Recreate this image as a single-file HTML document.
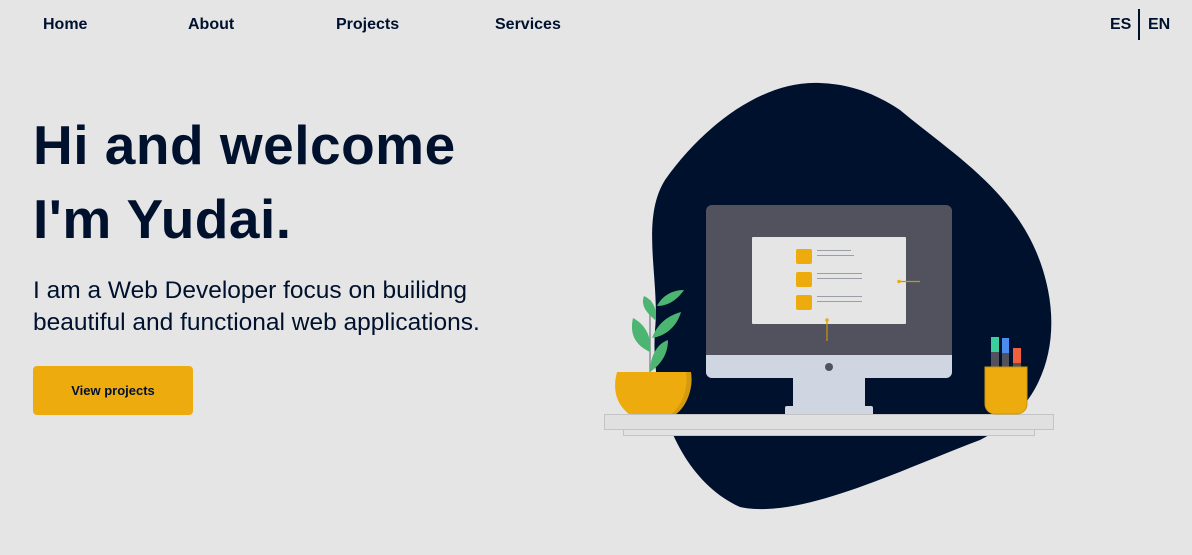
<!DOCTYPE html>
<html><head><meta charset="utf-8"><style>
*{margin:0;padding:0;box-sizing:border-box}
body{width:1192px;height:555px;background:#e5e5e5;font-family:"Liberation Sans",sans-serif;color:#00112e;position:relative;overflow:hidden}
.nav a{position:absolute;top:16px;font-weight:bold;font-size:16px;color:#00112e;text-decoration:none}
h1{position:absolute;left:33px;top:108px;font-size:55px;line-height:74px;font-weight:bold;letter-spacing:0.5px}
p{position:absolute;left:33px;top:275px;font-size:24.5px;line-height:32px}
.btn{position:absolute;left:33px;top:366px;width:160px;height:49px;background:#eeab0e;border-radius:4px;font-size:13px;font-weight:bold;display:flex;align-items:center;justify-content:center}
svg{position:absolute;left:0;top:0}
</style></head><body>
<div class="nav">
<a style="left:43px">Home</a><a style="left:188px">About</a><a style="left:336px">Projects</a><a style="left:495px">Services</a>
<a style="left:1110px">ES</a><a style="left:1148px">EN</a>
</div>
<div style="position:absolute;left:1138px;top:9px;width:2px;height:31px;background:#00112e"></div>
<h1>Hi and welcome<br>I'm Yudai.</h1>
<p>I am a Web Developer focus on builidng<br>beautiful and functional web applications.</p>
<div class="btn">View projects</div>
<svg width="1192" height="555">
<path d="M820 83 C760 80 700 130 665 180 C640 220 660 280 655 330 C650 400 680 480 740 507 C800 520 900 470 980 440 C1040 410 1060 350 1048 290 C1030 200 960 160 900 110 C870 90 845 84 820 83 Z" fill="#00112d"/>
<rect x="706" y="205" width="246" height="173" rx="6" fill="#52525f"/>
<path d="M706 355 H952 V372 a6 6 0 0 1 -6 6 H712 a6 6 0 0 1 -6 -6 Z" fill="#d0d5e2"/>
<circle cx="829" cy="367" r="4" fill="#52525f"/>
<rect x="752" y="237" width="154" height="87" rx="1" fill="#e5e5e5"/>
<rect x="796" y="249" width="16" height="15" rx="2" fill="#eeab0e"/>
<rect x="796" y="272" width="16" height="15" rx="2" fill="#eeab0e"/>
<rect x="796" y="295" width="16" height="15" rx="2" fill="#eeab0e"/>
<g stroke="#9a9ea6" stroke-width="1"><path d="M817 250.5h34M817 255.5h37M817 273.5h45M817 278.5h45M817 296.5h45M817 301.5h45"/></g>
<path d="M899 281.5h21M827 320v21" stroke="#c8960e" stroke-width="1.2"/>
<circle cx="899" cy="281.5" r="1.8" fill="#eeab0e"/><circle cx="827" cy="320" r="1.8" fill="#eeab0e"/>
<rect x="793" y="378" width="72" height="32" fill="#d0d5e2"/>
<rect x="785" y="406" width="88" height="10" rx="2" fill="#d0d5e2"/>
<rect x="604.5" y="414.5" width="449" height="15" fill="#e0e0e0" stroke="#c4c4c4"/>
<rect x="623.5" y="429.5" width="411" height="6" fill="#e2e2e2" stroke="#c4c4c4"/>
<path d="M650 372 V300" stroke="#8a8f98" stroke-width="1.5"/>
<path d="M650 372 C650 358 656 344 668 340 C668 355 660 365 650 372Z" fill="#4bb571"/>
<path d="M650 352 C642 348 628 340 633 318 C646 325 652 338 650 352Z" fill="#4bb571"/>
<path d="M652 338 C658 322 670 315 681 312 C677 326 666 336 652 338Z" fill="#4bb571"/>
<path d="M655 320 C648 314 640 306 644 296 C653 300 658 310 655 320Z" fill="#4bb571"/>
<path d="M657 306 C662 296 672 290 684 290 C677 300 668 306 657 306Z" fill="#4bb571"/>
<path d="M620 372 H691 C694 390 685 408 676 414 H632 C620 405 614 390 620 372Z" fill="#d49a10"/>
<path d="M617 372 H686 C689 390 680 408 671 414 H629 C617 405 612 390 617 372Z" fill="#eeab0e"/>
<rect x="991" y="337" width="8" height="30" fill="#52525f"/><rect x="991" y="337" width="8" height="15" fill="#3ccf9e"/>
<rect x="1002" y="338" width="7" height="29" fill="#52525f"/><rect x="1002" y="338" width="7" height="15" fill="#4a8cf0"/>
<rect x="1013" y="348" width="8" height="19" fill="#52525f"/><rect x="1013" y="348" width="8" height="15" fill="#f06040"/>
<path d="M985 367 H1027 V404 a10 10 0 0 1 -10 10 H995 a10 10 0 0 1 -10 -10 Z" fill="#eeab0e" stroke="#c8960e" stroke-width="1"/>
</svg>
</body></html>
